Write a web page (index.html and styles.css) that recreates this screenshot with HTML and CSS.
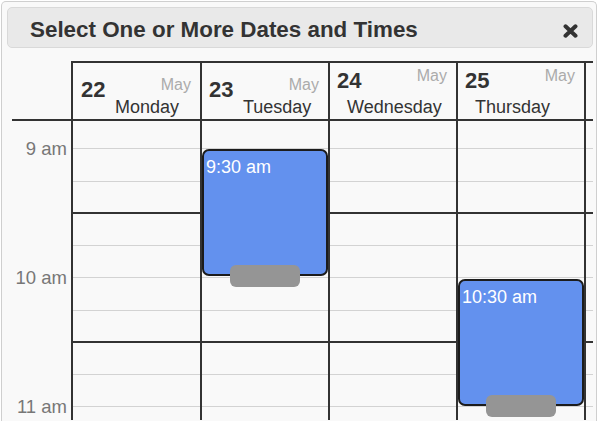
FILE: index.html
```html
<!DOCTYPE html>
<html lang="en">
<head>
<meta charset="utf-8">
<title>Select One or More Dates and Times</title>
<link rel="stylesheet" href="styles.css">
</head>
<body>
<div class="dialog">
  <div class="titlebar">
    <h1 class="title">Select One or More Dates and Times</h1>
    <button class="close" aria-label="Close">
      <svg width="15" height="14" viewBox="0 0 15 14"><path d="M2.5 2.3 L12.5 11.7 M12.5 2.3 L2.5 11.7" stroke="#333" stroke-width="4" stroke-linecap="round"/></svg>
    </button>
  </div>
  <div class="cal">
    <div class="corner"></div>
    <div class="dayhead late first"><div class="top"><span class="num">22</span><span class="month">May</span></div><div class="name">Monday</div></div>
    <div class="dayhead late"><div class="top"><span class="num">23</span><span class="month">May</span></div><div class="name">Tuesday</div></div>
    <div class="dayhead early"><div class="top"><span class="num">24</span><span class="month">May</span></div><div class="name">Wednesday</div></div>
    <div class="dayhead early"><div class="top"><span class="num">25</span><span class="month">May</span></div><div class="name">Thursday</div></div>
    <div class="dayhead stub"></div>

    <div class="gutter">
      <div class="hour">9 am</div>
      <div class="hour">10 am</div>
      <div class="hour">11 am</div>
    </div>

    <div class="day">
      <div class="slot lead"></div><div class="slot"></div><div class="slot mid"></div><div class="slot"></div><div class="slot"></div><div class="slot"></div><div class="slot mid"></div><div class="slot"></div><div class="slot"></div><div class="slot"></div>
    </div>
    <div class="day">
      <div class="slot lead"></div><div class="slot"></div><div class="slot mid"></div><div class="slot"></div><div class="slot"></div><div class="slot"></div><div class="slot mid"></div><div class="slot"></div><div class="slot"></div><div class="slot"></div>
      <div class="event" style="top:28px"><span class="etime">9:30 am</span><span class="grip"></span></div>
    </div>
    <div class="day">
      <div class="slot lead"></div><div class="slot"></div><div class="slot mid"></div><div class="slot"></div><div class="slot"></div><div class="slot"></div><div class="slot mid"></div><div class="slot"></div><div class="slot"></div><div class="slot"></div>
    </div>
    <div class="day">
      <div class="slot lead"></div><div class="slot"></div><div class="slot mid"></div><div class="slot"></div><div class="slot"></div><div class="slot"></div><div class="slot mid"></div><div class="slot"></div><div class="slot"></div><div class="slot"></div>
      <div class="event" style="top:158px"><span class="etime">10:30 am</span><span class="grip"></span></div>
    </div>
    <div class="day stub">
      <div class="slot lead"></div><div class="slot"></div><div class="slot mid"></div><div class="slot"></div><div class="slot"></div><div class="slot"></div><div class="slot mid"></div><div class="slot"></div><div class="slot"></div><div class="slot"></div>
    </div>
  </div>
</div>
</body>
</html>
```
FILE: styles.css
```css
* { box-sizing: border-box; }

html, body {
  margin: 0;
  height: 421px;
  overflow: hidden;
  background: #fff;
  font-family: "Liberation Sans", Arial, Helvetica, sans-serif;
}

.dialog {
  margin: 1px 0 0 1px;
  width: 596px;
  height: 420px;
  overflow: hidden;
  border: 1px solid #cfcfcf;
  border-bottom: 0;
  border-radius: 5px 5px 0 0;
  background: #f9f9f9;
  padding: 5px 3px 0 5px;
}

.titlebar {
  display: flex;
  justify-content: space-between;
  align-items: flex-start;
  height: 41px;
  border: 1px solid #d9d9d9;
  border-radius: 5px;
  background: #e9e9e9;
}

.title {
  margin: 0;
  padding: 4px 0 0 22px;
  font-size: 22.4px;
  line-height: 35px;
  font-weight: bold;
  color: #333;
}

.close {
  margin: 16px 14px 0 0;
  padding: 0;
  border: 0;
  background: none;
}

.close svg { display: block; }

.cal {
  margin-top: 13px;
  display: grid;
  grid-template-columns: 64px 129px 128px 128px 128px 9px;
  grid-template-rows: 60px 299px;
}

.corner {
  margin-left: 5px;
  border-bottom: 2px solid #333;
}

.dayhead {
  display: flex;
  flex-direction: column;
  min-width: 0;
  border-top: 2px solid #333;
  border-bottom: 2px solid #333;
  border-left: 2px solid #333;
  padding: 0 9px 2px 7px;
}

.dayhead.first { padding-left: 8px; }
.dayhead.stub { padding: 0; }

.top {
  flex: 1 1 0;
  min-height: 0;
  display: flex;
  justify-content: space-between;
  align-items: flex-start;
}

.late .top { padding-top: 15px; }
.early .top { padding-top: 6px; }

.num {
  font-size: 22px;
  line-height: 24px;
  font-weight: bold;
  color: #333;
}

.month {
  margin-top: -2px;
  font-size: 16px;
  line-height: 18px;
  color: #ababab;
}

.name {
  font-size: 18px;
  line-height: 20px;
  color: #333;
  white-space: nowrap;
}

.late .name { margin-left: 34px; }
.early .name { margin-left: 10px; }

.gutter {
  padding: 17.5px 4px 0 0;
  text-align: right;
  font-size: 18.5px;
  line-height: 20px;
  color: #777;
}

.hour { height: 129px; }

.day {
  position: relative;
  border-left: 2px solid #333;
  overflow: hidden;
}

.slot {
  height: 32.25px;
  border-bottom: 1px solid #d3d3d3;
}

.slot.lead { height: 28.25px; }
.slot.mid { border-bottom: 2px solid #333; }

.event {
  position: absolute;
  left: 0;
  right: 0;
  height: 127px;
  border: 2px solid #1c1c1c;
  border-radius: 7px;
  background: #6391ee;
  padding: 6px 2px;
  color: #fff;
  font-size: 18px;
  line-height: 20px;
}

.grip {
  position: absolute;
  top: 114px;
  left: 50%;
  width: 70px;
  height: 22px;
  margin-left: -35px;
  border-radius: 6px;
  background: #959595;
}
```
